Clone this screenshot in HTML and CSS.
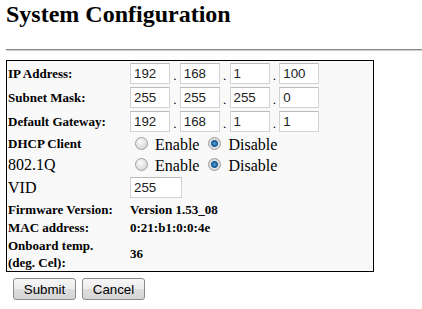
FILE: index.html
```html
<!DOCTYPE html>
<html>
<head>
<meta charset="utf-8">
<link rel="stylesheet" href="styles.css">
</head>
<body>
<h2 class="title">System Configuration</h2>
<hr class="rule">
<div class="panel">
  <div class="row row-ip">
    <div class="label">IP Address:</div>
    <div class="value ip"><input class="octet" value="192"> . <input class="octet" value="168"> . <input class="octet" value="1"> . <input class="octet" value="100"></div>
  </div>
  <div class="row row-ip">
    <div class="label">Subnet Mask:</div>
    <div class="value ip"><input class="octet" value="255"> . <input class="octet" value="255"> . <input class="octet" value="255"> . <input class="octet" value="0"></div>
  </div>
  <div class="row row-ip">
    <div class="label">Default Gateway:</div>
    <div class="value ip"><input class="octet" value="192"> . <input class="octet" value="168"> . <input class="octet" value="1"> . <input class="octet" value="1"></div>
  </div>
  <div class="row row-radio">
    <div class="label">DHCP Client</div>
    <div class="value big"><input type="radio" class="radio" name="dhcp"> Enable <input type="radio" class="radio" name="dhcp" checked> Disable</div>
  </div>
  <div class="row row-radio">
    <div class="label plain">802.1Q</div>
    <div class="value big"><input type="radio" class="radio" name="vlan"> Enable <input type="radio" class="radio" name="vlan" checked> Disable</div>
  </div>
  <div class="row row-vid">
    <div class="label plain">VID</div>
    <div class="value"><input class="vid" value="255"></div>
  </div>
  <div class="row row-info">
    <div class="label">Firmware Version:</div>
    <div class="value strong">Version 1.53_08</div>
  </div>
  <div class="row row-info">
    <div class="label">MAC address:</div>
    <div class="value strong">0:21:b1:0:0:4e</div>
  </div>
  <div class="row row-temp">
    <div class="label tall">Onboard temp.<br>(deg. Cel):</div>
    <div class="value strong">36</div>
  </div>
</div>
<div class="actions">
  <button class="btn">Submit</button>
  <button class="btn">Cancel</button>
</div>
</body>
</html>
```

FILE: styles.css
```css
html, body {
  background: #ffffff;
}
body {
  margin: 0 0 0 6px;
  font-family: "Liberation Serif", "Times New Roman", serif;
  color: #000;
}
.title {
  margin: 0;
  font-size: 24px;
  line-height: 28px;
  font-weight: bold;
}
.rule {
  margin: 21px 0 9px 0;
  height: 0;
  border: 0;
  border-top: 1px solid #8a8a8a;
  border-bottom: 1px solid #cfcfcf;
}
.panel {
  width: 368px;
  box-sizing: border-box;
  border: 1px solid #000;
  background: #f9f9f9;
}
.row {
  display: flex;
  align-items: center;
}
.row-ip { height: 24px; }
.row-radio { height: 21px; }
.row-vid { height: 25px; }
.row-info { height: 18px; }
.row-temp { height: 35px; }
.label {
  width: 122px;
  flex: none;
  padding-left: 1px;
  font-size: 13px;
  font-weight: bold;
  line-height: 15px;
}
.label.plain {
  font-weight: normal;
  font-size: 16px;
  line-height: 18px;
}
.label.tall {
  line-height: 17px;
}
.value {
  font-size: 13px;
  line-height: 15px;
  white-space: nowrap;
}
.value.ip {
  line-height: 25px;
  height: 21px;
}
.value.big {
  font-size: 16px;
  line-height: 18px;
}
.value.strong {
  font-weight: bold;
}
.octet, .vid {
  box-sizing: border-box;
  height: 21px;
  width: 40px;
  margin: 0;
  padding: 0 3px;
  border: 1px solid #d2d2d2;
  border-top-color: #b9b9b9;
  background: #fff;
  font-family: "Liberation Sans", Arial, sans-serif;
  font-size: 13.33px;
  color: #222;
  vertical-align: top;
}
.vid {
  width: 52px;
}
.radio {
  appearance: none;
  -webkit-appearance: none;
  box-sizing: border-box;
  width: 13px;
  height: 13px;
  margin: 3px 3px 0 5px;
  border: 1px solid #9c9c9c;
  border-radius: 50%;
  background: radial-gradient(circle at 40% 35%, #fafafa 0, #e2e2e2 55%, #cfcfcf 100%);
  vertical-align: baseline;
}
.radio:checked {
  background: radial-gradient(circle at 50% 50%, #5aa7de 0, #1d5f97 2.5px, #2d6ea6 3.4px, #e4e4e4 3.8px, #d0d0d0 100%);
}
.actions {
  margin-top: 6px;
  padding-left: 7px;
  display: flex;
  gap: 6px;
}
.btn {
  box-sizing: border-box;
  height: 22px;
  width: 63px;
  padding: 0;
  border: 1px solid #8a8a8a;
  border-radius: 3px;
  background: linear-gradient(#f6f6f6 0%, #ececec 48%, #dedede 52%, #d4d4d4 100%);
  font-family: "Liberation Sans", Arial, sans-serif;
  font-size: 13.33px;
  color: #000;
}
```
